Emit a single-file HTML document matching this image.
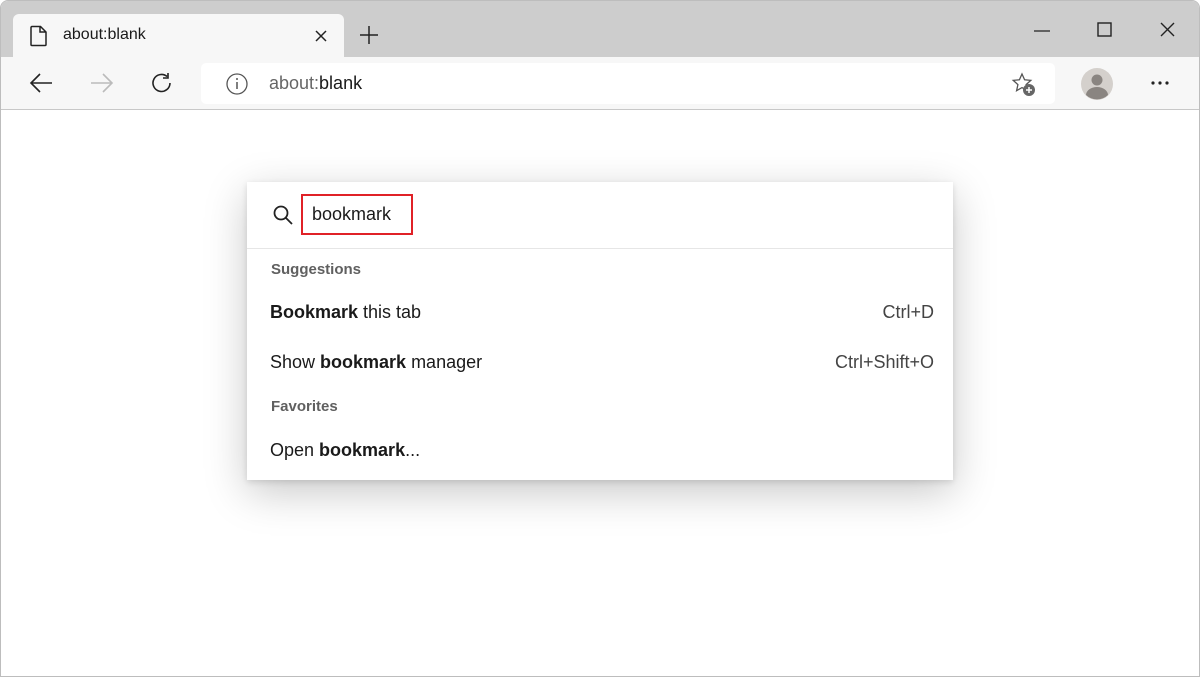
<!DOCTYPE html>
<html><head><meta charset="utf-8"><style>
*{margin:0;padding:0;box-sizing:border-box}
body{width:1200px;height:677px;background:#fff;font-family:"Liberation Sans",sans-serif;position:relative;overflow:hidden}
.win{position:absolute;left:0;top:0;width:1200px;height:677px;border:1px solid #bdbdbd;border-radius:8px 8px 0 0;overflow:hidden;background:#fff}
.top{position:absolute;left:0;top:0;width:100%;height:56px;background:#cdcdcd}
.tab{position:absolute;left:12px;top:13px;width:331px;height:44px;background:#f7f7f7;border-radius:6px 6px 0 0}
.bar{position:absolute;left:0;top:56px;width:100%;height:53px;background:#f7f7f7;border-bottom:1px solid #c8c8c8}
.addr{position:absolute;left:200px;top:6px;width:854px;height:41px;background:#fff;border-radius:5px}
.t{position:absolute;white-space:nowrap}
.pop{position:absolute;left:246px;top:181px;width:706px;height:298px;background:#fff;box-shadow:0 12px 40px rgba(0,0,0,.22),0 2px 6px rgba(0,0,0,.12)}
.row{position:absolute;font-size:18px;color:#1a1a1a}
.hd{position:absolute;font-size:15px;color:#606060;font-weight:bold;left:24px}
.kb{position:absolute;right:19px;font-size:18px;color:#444}
</style></head><body><div class="win">
<div class="top">
 <div class="tab">
  <svg style="position:absolute;left:16px;top:11px" width="20" height="22" viewBox="0 0 20 22"><path d="M3 1.5h8.5l5.5 5.5v12.5a1 1 0 0 1-1 1H3a1 1 0 0 1-1-1v-17a1 1 0 0 1 1-1zM11 1.5v5.5h6" fill="none" stroke="#222" stroke-width="1.5"/></svg>
  <div class="t" style="left:50px;top:12px;font-size:16px;color:#1a1a1a">about:blank</div>
  <svg style="position:absolute;left:302px;top:16px" width="12" height="12"><path d="M1 1l10 10M11 1L1 11" stroke="#222" stroke-width="1.5"/></svg>
 </div>
 <svg style="position:absolute;left:358px;top:24px" width="20" height="20"><path d="M10 1v18M1 10h18" stroke="#222" stroke-width="1.5"/></svg>
 <svg style="position:absolute;left:1033px;top:29px" width="16" height="2"><path d="M0 1h16" stroke="#222" stroke-width="1.3"/></svg>
 <svg style="position:absolute;left:1096px;top:21px" width="15" height="15"><rect x="1" y="1" width="13" height="13" fill="none" stroke="#222" stroke-width="1.4"/></svg>
 <svg style="position:absolute;left:1159px;top:21px" width="15" height="15"><path d="M1 1l13 13M14 1L1 14" stroke="#222" stroke-width="1.4"/></svg>
</div>
<div class="bar">
 <svg style="position:absolute;left:28px;top:16px" width="24" height="20"><path d="M2 10h21M11 1L2 10l9 9" fill="none" stroke="#222" stroke-width="1.6"/></svg>
 <svg style="position:absolute;left:89px;top:16px" width="24" height="20"><path d="M1 10h21M13 1l9 9-9 9" fill="none" stroke="#bbb" stroke-width="1.6"/></svg>
 <svg style="position:absolute;left:149px;top:14px" width="24" height="24"><path d="M20 12a8.5 8.5 0 1 1-3-6.5M18 2v5h-5" fill="none" stroke="#222" stroke-width="1.6"/></svg>
 <div class="addr">
  <svg style="position:absolute;left:24px;top:9px" width="24" height="24"><circle cx="12" cy="12" r="10" fill="none" stroke="#555" stroke-width="1.3"/><path d="M12 10v7" stroke="#555" stroke-width="1.5"/><circle cx="12" cy="7" r="1" fill="#555"/></svg>
  <div class="t" style="left:68px;top:10px;font-size:18px;color:#666">about:<span style="color:#1a1a1a">blank</span></div>
  <svg style="position:absolute;left:810px;top:9px" width="26" height="26"><path d="M11 2l2.6 5.8 6.2.6-4.7 4.2 1.3 6.1L11 15.6 5.6 18.7l1.3-6.1L2.2 8.4l6.2-.6z" fill="none" stroke="#555" stroke-width="1.3"/><circle cx="18" cy="18" r="6" fill="#666"/><path d="M18 15v6M15 18h6" stroke="#fff" stroke-width="1.5"/></svg>
 </div>
 <svg style="position:absolute;left:1080px;top:11px" width="32" height="32"><circle cx="16" cy="16" r="16" fill="#d4d0cc"/><circle cx="16" cy="12" r="5.5" fill="#8a8581"/><path d="M5 27a11 8 0 0 1 22 0a16 16 0 0 1-22 0z" fill="#8a8581"/></svg>
 <svg style="position:absolute;left:1150px;top:24px" width="20" height="4"><circle cx="2" cy="2" r="1.6" fill="#222"/><circle cx="9" cy="2" r="1.6" fill="#222"/><circle cx="16" cy="2" r="1.6" fill="#222"/></svg>
</div>
<div class="pop">
 <svg style="position:absolute;left:25px;top:22px" width="22" height="22"><circle cx="9" cy="9" r="6.5" fill="none" stroke="#222" stroke-width="1.8"/><path d="M14 14l6 6" stroke="#222" stroke-width="1.8"/></svg>
 <div style="position:absolute;left:54px;top:12px;width:112px;height:41px;border:2px solid #e02127"></div>
 <div class="row" style="left:65px;top:22px">bookmark</div>
 <div style="position:absolute;left:0;top:66px;width:100%;height:1px;background:#e6e6e6"></div>
 <div class="hd" style="top:79px">Suggestions</div>
 <div class="row" style="left:23px;top:120px"><b>Bookmark</b> this tab</div>
 <div class="kb" style="top:120px">Ctrl+D</div>
 <div class="row" style="left:23px;top:170px">Show <b>bookmark</b> manager</div>
 <div class="kb" style="top:170px">Ctrl+Shift+O</div>
 <div class="hd" style="top:216px">Favorites</div>
 <div class="row" style="left:23px;top:258px">Open <b>bookmark</b>...</div>
</div>
</div></body></html>
